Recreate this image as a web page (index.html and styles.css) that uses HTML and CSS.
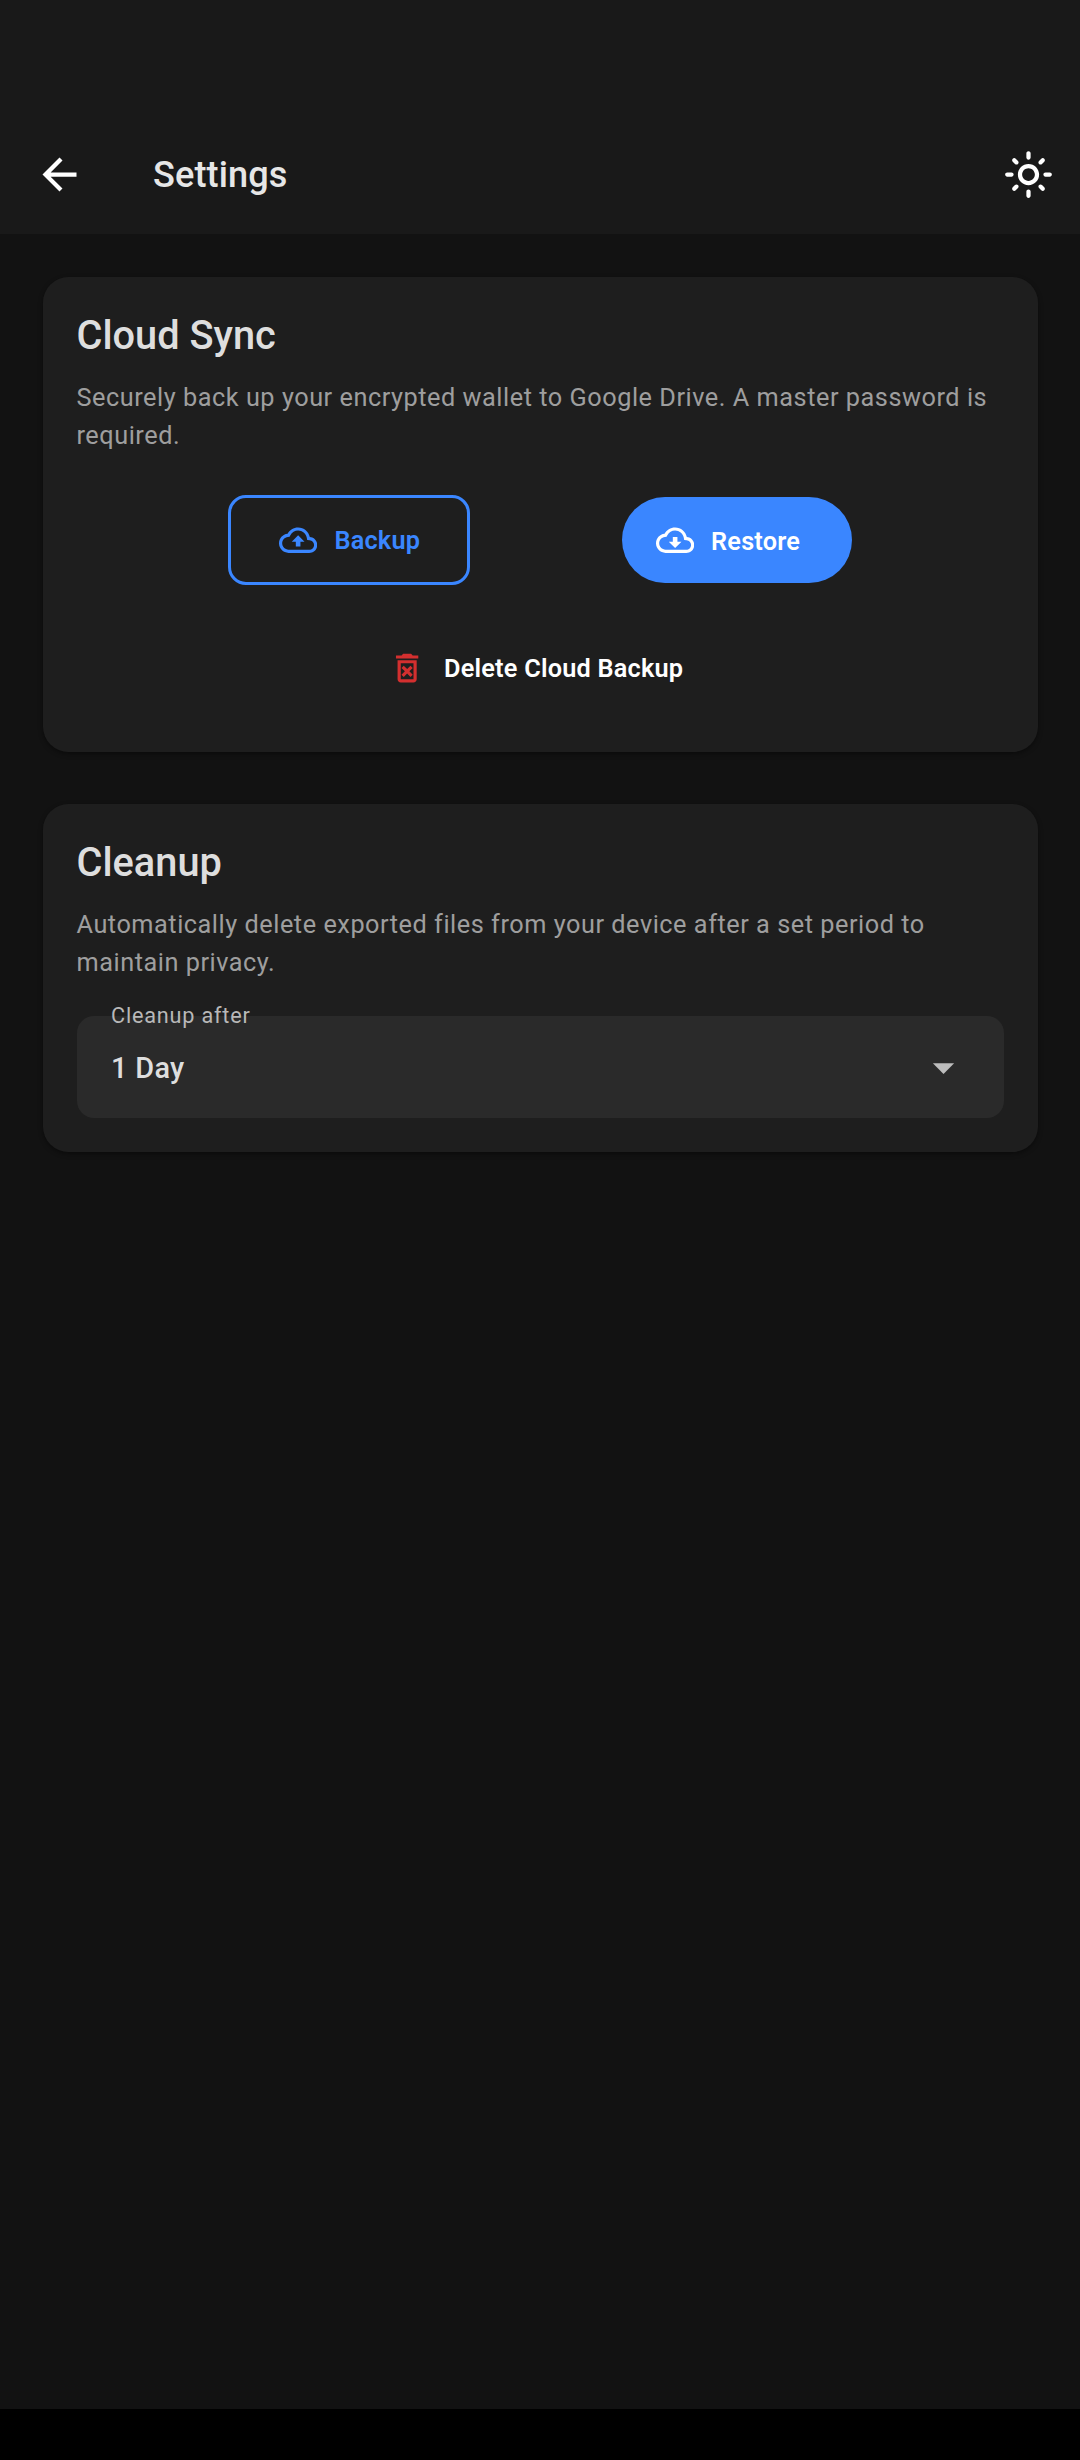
FILE: index.html
```html
<!DOCTYPE html>
<html lang="en">
<head>
<meta charset="utf-8">
<title>Settings</title>
<link rel="stylesheet" href="styles.css">
</head>
<body>
<header class="app-bar">
  <button class="icon-button back" aria-label="Back">
    <svg class="icon-lg" viewBox="0 0 24 24"><path d="M20 11H7.83l5.59-5.59L12 4l-8 8 8 8 1.41-1.41L7.83 13H20v-2z"/></svg>
  </button>
  <h1 class="app-title">Settings</h1>
  <button class="icon-button theme" aria-label="Toggle theme">
    <svg class="icon-lg" viewBox="0 0 24 24"><path d="M12 9c1.65 0 3 1.35 3 3s-1.35 3-3 3-3-1.35-3-3 1.35-3 3-3m0-2c-2.76 0-5 2.24-5 5s2.24 5 5 5 5-2.24 5-5-2.24-5-5-5zM2 13h2c.55 0 1-.45 1-1s-.45-1-1-1H2c-.55 0-1 .45-1 1s.45 1 1 1zm18 0h2c.55 0 1-.45 1-1s-.45-1-1-1h-2c-.55 0-1 .45-1 1s.45 1 1 1zM11 2v2c0 .55.45 1 1 1s1-.45 1-1V2c0-.55-.45-1-1-1s-1 .45-1 1zm0 18v2c0 .55.45 1 1 1s1-.45 1-1v-2c0-.55-.45-1-1-1s-1 .45-1 1zM5.99 4.58c-.39-.39-1.03-.39-1.41 0-.39.39-.39 1.03 0 1.41l1.06 1.06c.39.39 1.03.39 1.41 0s.39-1.03 0-1.41L5.99 4.58zm12.37 12.37c-.39-.39-1.03-.39-1.41 0-.39.39-.39 1.03 0 1.41l1.06 1.06c.39.39 1.03.39 1.41 0 .39-.39.39-1.03 0-1.41l-1.06-1.06zm1.06-10.96c.39-.39.39-1.03 0-1.41-.39-.39-1.03-.39-1.41 0l-1.06 1.06c-.39.39-.39 1.03 0 1.41s1.03.39 1.41 0l1.06-1.06zM7.05 18.36c.39-.39.39-1.03 0-1.41-.39-.39-1.03-.39-1.41 0l-1.06 1.06c-.39.39-.39 1.03 0 1.41s1.03.39 1.41 0l1.06-1.06z"/></svg>
  </button>
</header>
<main class="content">
  <section class="card sync">
    <h2 class="card-title">Cloud Sync</h2>
    <p class="card-text">Securely back up your encrypted wallet to Google Drive. A master password is required.</p>
    <div class="actions">
      <button class="button outlined">
        <svg class="icon-sm" viewBox="0 0 24 24"><path d="M19.35 10.04C18.67 6.59 15.64 4 12 4 9.11 4 6.6 5.64 5.35 8.04 2.34 8.36 0 10.91 0 14c0 3.31 2.69 6 6 6h13c2.76 0 5-2.24 5-5 0-2.64-2.05-4.78-4.65-4.96zM19 18H6c-2.21 0-4-1.79-4-4 0-2.05 1.53-3.76 3.56-3.97l1.07-.11.5-.95C8.08 7.14 9.94 6 12 6c2.62 0 4.88 1.86 5.39 4.43l.3 1.5 1.53.11c1.56.1 2.78 1.41 2.78 2.96 0 1.65-1.35 3-3 3zM8 13h2.55v3h2.9v-3H16l-4-4z"/></svg>
        <span>Backup</span>
      </button>
      <button class="button filled">
        <svg class="icon-sm" viewBox="0 0 24 24"><path d="M19.35 10.04C18.67 6.59 15.64 4 12 4 9.11 4 6.6 5.64 5.35 8.04 2.34 8.36 0 10.91 0 14c0 3.31 2.69 6 6 6h13c2.76 0 5-2.24 5-5 0-2.64-2.05-4.78-4.65-4.96zM19 18H6c-2.21 0-4-1.79-4-4 0-2.05 1.53-3.76 3.56-3.97l1.07-.11.5-.95C8.08 7.14 9.94 6 12 6c2.62 0 4.88 1.86 5.39 4.43l.3 1.5 1.53.11c1.56.1 2.78 1.41 2.78 2.96 0 1.65-1.35 3-3 3zM13.45 10h-2.9v3H8l4 4 4-4h-2.55z"/></svg>
        <span>Restore</span>
      </button>
    </div>
    <button class="button delete">
      <svg class="icon-sm" viewBox="0 0 24 24"><path d="M14.12 10.47L12 12.59l-2.13-2.12-1.41 1.41L10.59 14l-2.12 2.12 1.41 1.41L12 15.41l2.12 2.12 1.41-1.41L13.41 14l2.12-2.12zM15.5 4l-1-1h-5l-1 1H5v2h14V4zM6 19c0 1.1.9 2 2 2h8c1.1 0 2-.9 2-2V7H6v12zM8 9h8v10H8V9z"/></svg>
      <span>Delete Cloud Backup</span>
    </button>
  </section>
  <section class="card">
    <h2 class="card-title">Cleanup</h2>
    <p class="card-text">Automatically delete exported files from your device after a set period to maintain privacy.</p>
    <div class="select">
      <span class="select-label">Cleanup after</span>
      <span class="select-value">1 Day</span>
      <svg class="icon-lg" viewBox="0 0 24 24"><path d="M7 10l5 5 5-5z"/></svg>
    </div>
  </section>
</main>
<footer class="nav-bar"></footer>
</body>
</html>
```
FILE: styles.css
```css
* { box-sizing: border-box; }

body {
  display: flex;
  flex-direction: column;
  height: 2460px;
  margin: 0;
  background: #121212;
  color: #dedede;
  font-family: Roboto, sans-serif;
}

h1, h2, p { margin: 0; }

button {
  padding: 0;
  border: 0;
  background: none;
  color: inherit;
  font: inherit;
}

svg {
  display: block;
  flex: none;
  fill: currentColor;
}

.icon-lg { width: 51px; height: 51px; }
.icon-sm { width: 38.25px; height: 38.25px; }

.app-bar {
  display: flex;
  align-items: center;
  height: 234px;
  padding: 115px 0 0;
  background: #191919;
}

.icon-button {
  display: flex;
  align-items: center;
  justify-content: center;
  height: 102px;
  color: #fff;
}

.back { width: 119px; }
.theme { width: 103px; }

.app-title {
  flex: 1;
  padding-left: 34px;
  color: #e6e6e6;
  font-size: 36.125px;
  font-weight: 500;
  letter-spacing: 0.1px;
  line-height: 46px;
}

.content {
  display: flex;
  flex: 1;
  flex-direction: column;
  gap: 51px;
  padding: 42.5px;
}

.card {
  display: flex;
  flex-direction: column;
  padding: 34px;
  border-radius: 25.5px;
  background: #1e1e1e;
  box-shadow: 0 2px 5px rgba(0, 0, 0, 0.4);
}

.sync { padding-bottom: 41.5px; }
.sync + .card { margin-top: 0.5px; }

.card-title {
  font-size: 39.74px;
  font-weight: 500;
  line-height: 50px;
}

.card-text {
  margin-top: 18px;
  color: #9e9e9e;
  font-size: 25.29px;
  letter-spacing: 0.53px;
  line-height: 38px;
}

.actions {
  display: flex;
  align-items: center;
  justify-content: space-evenly;
  height: 90px;
  margin: 40.5px 0;
}

.button {
  display: flex;
  align-items: center;
  gap: 17px;
  height: 86px;
  font-size: 25.29px;
  font-weight: 600;
  letter-spacing: 0.2125px;
  line-height: 30px;
  white-space: nowrap;
}

.button span { padding-top: 2px; }

.outlined {
  width: 242px;
  height: 90px;
  padding-left: 48px;
  border: 3px solid #3a86ff;
  border-radius: 18px;
  color: #3a86ff;
}

.filled {
  width: 230px;
  padding-left: 34px;
  border-radius: 43px;
  background: #3a86ff;
  color: #fff;
}

.filled span { padding-top: 3px; }

.delete {
  align-self: center;
  gap: 18px;
  height: 85px;
  padding: 0 34px 0 25px;
  color: #fff;
}

.delete svg { color: #d32f2f; }

.select {
  position: relative;
  display: flex;
  align-items: center;
  justify-content: space-between;
  height: 102px;
  margin-top: 34.5px;
  padding: 0 34.5px;
  border-radius: 17px;
  background: #2a2a2a;
}

.select-label {
  position: absolute;
  top: -13px;
  left: 34.5px;
  color: #b8b8b8;
  font-size: 21.675px;
  letter-spacing: 0.797px;
  line-height: 25px;
}

.select-value {
  padding-top: 2px;
  font-size: 28.9px;
  font-weight: 500;
  letter-spacing: 0.32px;
  line-height: 34px;
}

.select svg { color: #bdbdbd; }

.nav-bar {
  height: 51px;
  background: #000;
}
```
